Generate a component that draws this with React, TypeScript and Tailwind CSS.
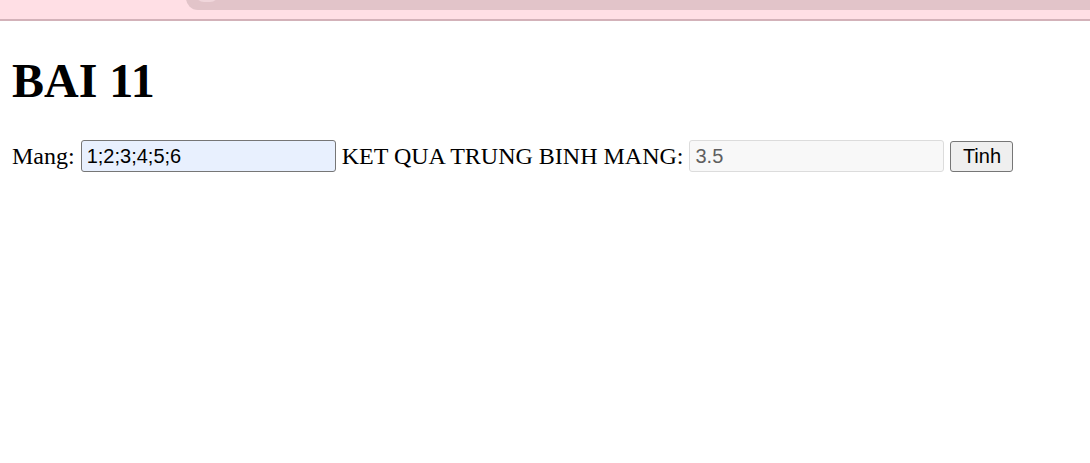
import { useState } from "react";

const App = () => {
  const [mang, setMang] = useState<string>("1;2;3;4;5;6");
  const [ketQua, setKetQua] = useState<string>("3.5");

  const tinh = () => {
    const nums = mang
      .split(";")
      .map((s) => Number(s.trim()))
      .filter((n) => !isNaN(n));
    if (nums.length > 0) {
      const tong = nums.reduce((a, b) => a + b, 0);
      setKetQua(String(tong / nums.length));
    }
  };

  return (
    <div className="w-screen min-h-screen bg-white text-black">
      {/* browser chrome strip */}
      <div className="relative h-[21px] bg-[#ffdfe5] border-b-2 border-[#d3b2b9] overflow-hidden">
        <div className="absolute left-[186px] right-0 top-[-20px] h-[30px] bg-[#e2c4c9] rounded-bl-[12px]">
          <div className="absolute left-[9px] top-[4px] w-[24px] h-[18px] rounded-full border-[3px] border-[#f0d6db]"></div>
        </div>
      </div>

      <div className="px-[12px] font-['Liberation_Serif',serif]">
        <h1 className="mt-[33px] mb-[33px] text-[48px] leading-[53px] font-bold">
          BAI 11
        </h1>
        <div className="flex items-center gap-[6px] text-[24px] leading-[32px]">
          <span>Mang:</span>
          <input
            className="w-[255px] h-[32px] px-[5px] bg-[#e8f0fe] border border-[#767676] rounded-[3px] text-[20px] font-['Liberation_Sans',sans-serif] outline-none"
            value={mang}
            onChange={(e) => setMang(e.target.value)}
          />
          <span>KET QUA TRUNG BINH MANG:</span>
          <input
            className="w-[255px] h-[32px] px-[5px] bg-[#f8f8f8] border border-[#dcdcdc] rounded-[3px] text-[20px] text-[#5f5f5f] font-['Liberation_Sans',sans-serif] outline-none"
            value={ketQua}
            readOnly
          />
          <button
            className="w-[63px] h-[31px] bg-[#efefef] border border-[#767676] rounded-[3px] text-[20px] leading-[24px] font-['Liberation_Sans',sans-serif]"
            onClick={tinh}
          >
            Tinh
          </button>
        </div>
      </div>
    </div>
  );
};

export default App;
